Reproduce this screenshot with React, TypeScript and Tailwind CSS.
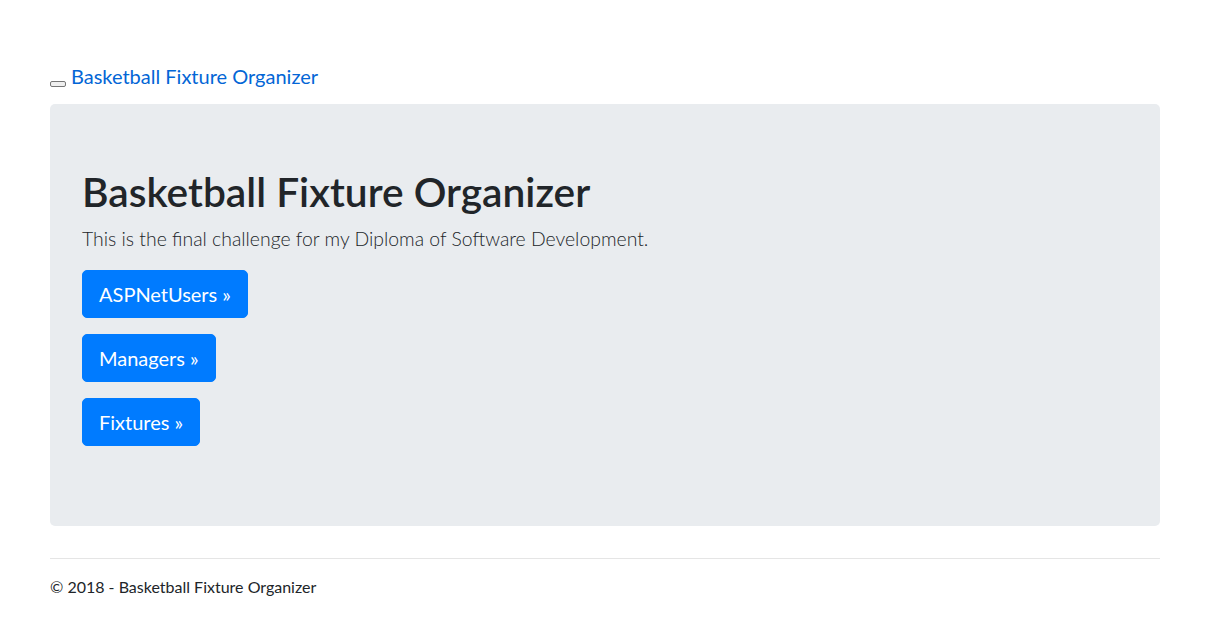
export default function App() {
  const font = { fontFamily: 'Lato, "Open Sans", sans-serif' };
  return (
    <div className="min-h-[618px] bg-white text-[#212529]" style={font}>
      <div className="w-[1110px] ml-[50px] pt-[61px]">
        <header className="flex items-start h-[30px] mb-[13px]">
          <button className="w-[16px] h-[6px] mt-[20px] bg-[#efefef] border border-[#767676] rounded-[2px] mr-[5px]" />
          <a href="#" className="text-[20px] leading-[30px] text-[#0366d6]">Basketball Fixture Organizer</a>
        </header>
        <div className="bg-[#e9ecef] rounded-[5px] px-[32px] pt-[64px] pb-[64px]">
          <h1 className="text-[40.7px] leading-[48px] font-semibold mb-[8px]">Basketball Fixture Organizer</h1>
          <p className="text-[19.4px] leading-[30px] font-light mb-[16px]">This is the final challenge for my Diploma of Software Development.</p>
          {["ASPNetUsers", "Managers", "Fixtures"].map((t) => (
            <p key={t} className="mb-[16px]">
              <a href="#" className="inline-block bg-[#007bff] text-white text-[20px] leading-[30px] px-[16px] py-[8px] border border-[#007bff] rounded-[5px]">{t} »</a>
            </p>
          ))}
        </div>
        <hr className="mt-[32px] border-t border-[#e5e5e5]" />
        <footer className="mt-[16px]">
          <p className="text-[16px] leading-[24px]">© 2018 - Basketball Fixture Organizer</p>
        </footer>
      </div>
    </div>
  );
}
